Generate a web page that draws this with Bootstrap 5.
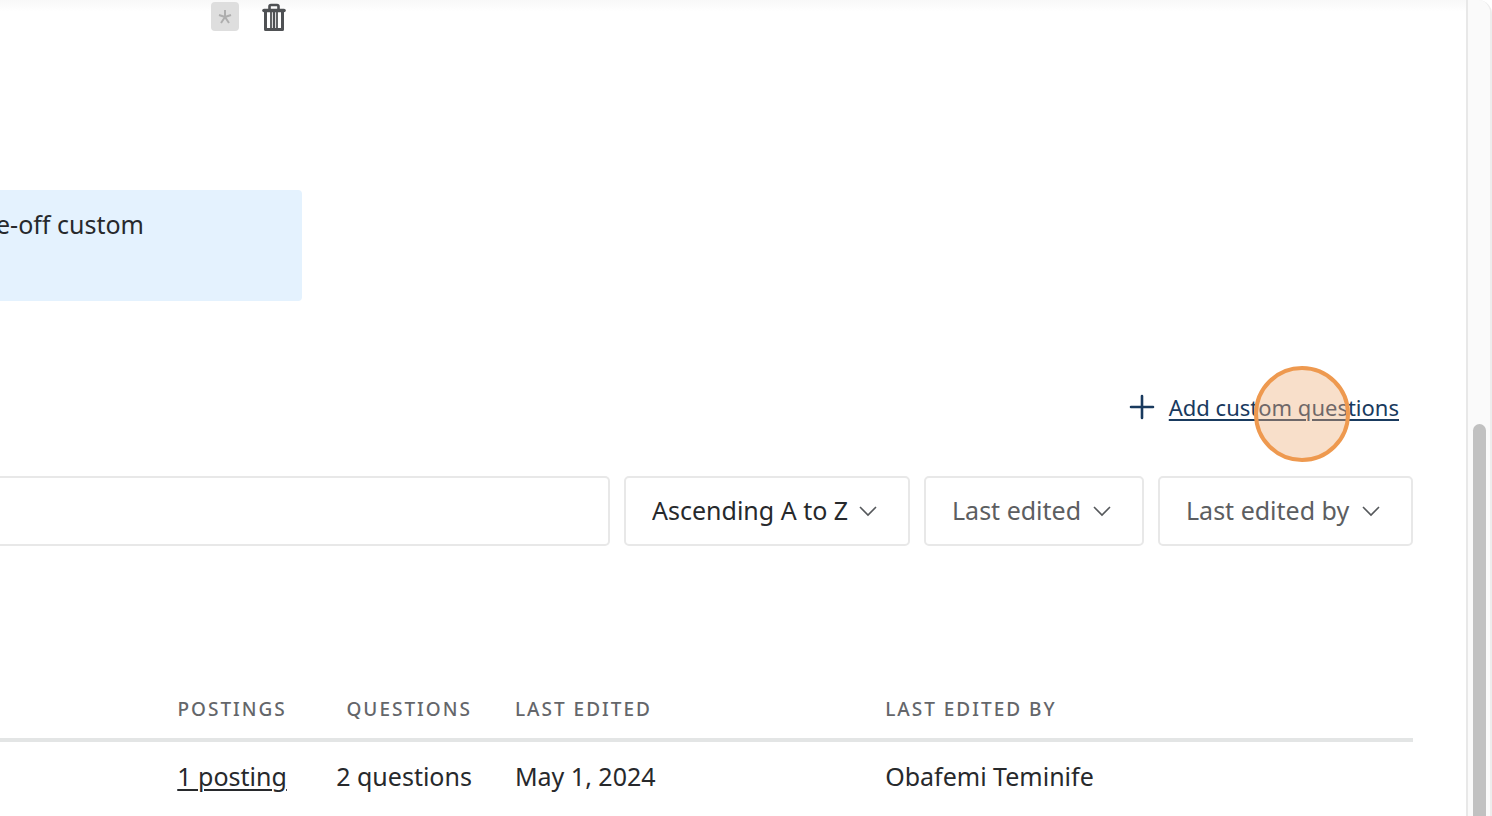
<!DOCTYPE html>
<html lang="en">
<head>
<meta charset="utf-8">
<meta name="viewport" content="width=device-width, initial-scale=1">
<title>Custom questions</title>
<link href="https://cdn.jsdelivr.net/npm/bootstrap@5.3.0/dist/css/bootstrap.min.css" rel="stylesheet">
<style>
  body { font-family: "Noto Sans", "Open Sans", sans-serif; font-size: 25px; line-height: 36px; color: #27292c; background: #fff; }
  .page-shell { min-height: 100vh; border-right: 2px solid #ededed; border-top-right-radius: 14px; background: linear-gradient(#f8f8f8, #fff 12px); overflow: hidden; }
  .page-main { padding-right: 53px; min-width: 0; }
  .scroll-track { width: 24px; background: #fafafa; border-left: 2px solid #e8e8e8; padding: 0 4px 0 5px; }
  .track-space { flex: 52 0 0; }
  .track-thumb { flex: 48 0 0; background: #c1c1c1; border-radius: 7px 7px 0 0; }
  .tool-row { height: 190px; padding: 2px 0 0 211px; gap: 23px; }
  .key-btn { width: 28px; height: 29px; border-radius: 4px; background: #dedede; }
  .notice { width: 21.4%; height: 111px; background: #e4f2fe; border-radius: 0 4px 4px 0; padding-top: 16px; text-indent: -4px; }
  .add-row { margin-top: 88px; padding-right: 14px; gap: 14px; color: #193a5e; font-size: 22px; }
  .add-row a { color: #193a5e; text-underline-offset: 3px; text-decoration-thickness: 2px; }
  .click-spot { width: 96px; height: 96px; top: -23px; right: 63px; border: 4px solid #ee994f; border-radius: 50%; background: rgba(238, 175, 122, .4); pointer-events: none; }
  .filters { gap: 14px; margin-top: 51px; }
  .filters .form-control, .filters .form-select { height: 70px; border: 2px solid #e8e8e8; border-radius: 5px; font-size: 25px; line-height: 36px; }
  .filters .form-control { border-left: 0; border-radius: 0 5px 5px 0; }
  .filters .form-select { flex: none; padding: 0 32px 2px 26px; color: #5c5e61; background: #fff url("data:image/svg+xml,%3Csvg xmlns='http://www.w3.org/2000/svg' viewBox='0 0 18 12'%3E%3Cpath d='M1 2l8 8 8-8' fill='none' stroke='%2355585b' stroke-width='1.6'/%3E%3C/svg%3E") no-repeat right 31px center / 18px 12px; }
  .filters .sort-select { width: 286px; color: #27292c; }
  .filters .edited-select { width: 220px; }
  .filters .editor-select { width: 255px; }
  .q-table { table-layout: fixed; margin: 145px 0 0; width: 100%; }
  .q-table th { font-size: 19px; line-height: 36px; font-weight: 500; letter-spacing: 2px; color: #64666a; padding: 0 0 11px; border-bottom: 4px solid #e3e5e5; }
  .q-table td { padding: 16px 0 0; border: 0; }
  .q-table .lead-gap { padding-left: 43px; }
  .q-table a { color: #27292c; text-underline-offset: 3px; text-decoration-thickness: 2px; }
</style>
</head>
<body>
<div class="page-shell d-flex">
  <main class="page-main flex-grow-1">
    <div class="tool-row d-flex align-items-start">
      <button type="button" class="key-btn btn p-0 border-0 d-flex align-items-center justify-content-center" aria-label="Required">
        <svg width="14" height="14" viewBox="0 0 14 14" fill="none" stroke="#aeaeae" stroke-width="2"><path d="M7 0v7M7 7L1 5M7 7l6-2M7 7l-4 6M7 7l4 6"/></svg>
      </button>
      <button type="button" class="btn p-0 border-0 d-flex" aria-label="Delete">
        <svg width="24" height="31" viewBox="0 0 24 31"><g fill="none" stroke="#4f5154"><path d="M7.500 7V4.500q0-1.500 1.500-1.500h6q1.500 0 1.500 1.500V7" stroke-width="2.600"/><path d="M2 8.500h20" stroke-width="3.600" stroke-linecap="round"/><path d="M3.500 9v18.500h17V9" stroke-width="3" stroke-linejoin="round"/><path d="M9 10v17M15 10v17" stroke-width="1.800"/><path d="M12 10v17" stroke-width="2.400"/></g></svg>
      </button>
    </div>
    <div class="notice">e-off custom</div>
    <div class="add-row position-relative d-flex align-items-center justify-content-end">
      <svg width="26" height="26" viewBox="0 0 26 26" fill="none" stroke="currentColor" stroke-width="2.600" stroke-linecap="round"><path d="M13 2v22M2 13h22"/></svg>
      <a href="#">Add custom questions</a>
      <span class="click-spot position-absolute"></span>
    </div>
    <form class="filters d-flex">
      <input type="search" class="form-control" aria-label="Search questions">
      <select class="form-select sort-select" aria-label="Sort order"><option>Ascending A to Z</option></select>
      <select class="form-select edited-select" aria-label="Last edited"><option>Last edited</option></select>
      <select class="form-select editor-select" aria-label="Last edited by"><option>Last edited by</option></select>
    </form>
    <table class="q-table">
      <colgroup><col style="width:20.3%"><col style="width:13.1%"><col style="width:26.2%"><col style="width:40.4%"></colgroup>
      <thead>
        <tr><th class="text-end">POSTINGS</th><th class="text-end">QUESTIONS</th><th class="lead-gap">LAST EDITED</th><th class="lead-gap">LAST EDITED BY</th></tr>
      </thead>
      <tbody>
        <tr><td class="text-end"><a href="#">1 posting</a></td><td class="text-end">2 questions</td><td class="lead-gap">May 1, 2024</td><td class="lead-gap">Obafemi Teminife</td></tr>
      </tbody>
    </table>
  </main>
  <div class="scroll-track d-flex flex-column flex-shrink-0" aria-hidden="true">
    <div class="track-space"></div>
    <div class="track-thumb"></div>
  </div>
</div>
<script src="https://cdn.jsdelivr.net/npm/bootstrap@5.3.0/dist/js/bootstrap.bundle.min.js"></script>
</body>
</html>
